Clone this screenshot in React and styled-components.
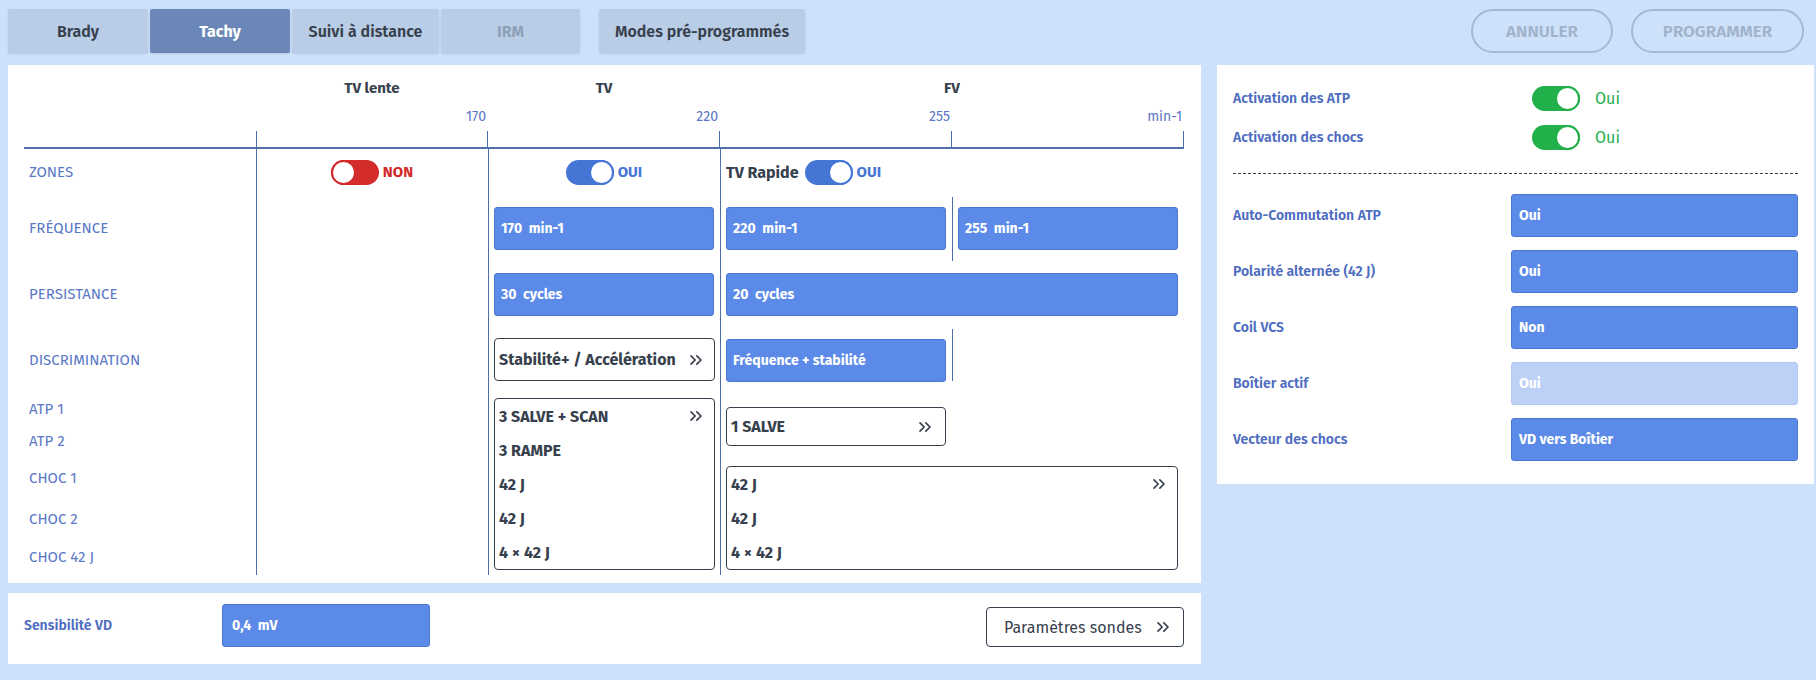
import React from 'react';
import styled, { createGlobalStyle, css } from 'styled-components';
import { ChevronsRight } from 'lucide-react';

const C = {
  page: '#cde1fa',
  tab: '#b9cde6',
  tabActive: '#6b87b8',
  dark: '#37404d',
  label: '#5a78c6',
  labelStrong: '#4e6cc0',
  line: '#4f70a6',
  fill: '#5b8ae8',
  fillBorder: '#4d78d0',
  disabled: '#bcd1f5',
  red: '#d42b2b',
  blue: '#4576d6',
  green: '#22b04b',
};

const GlobalStyle = createGlobalStyle`
  html, body { margin: 0; padding: 0; background: ${C.page}; }
  body {
    width: 1816px;
    height: 680px;
    overflow: hidden;
    font-family: "Fira Sans", "Open Sans", "Noto Sans", sans-serif;
    color: ${C.dark};
  }
  * { box-sizing: border-box; }
`;

const Page = styled.div`
  padding: 9px 2px 0 8px;
  display: flex;
  flex-direction: column;
  gap: 12px;
`;

/* ---------- top bar ---------- */
const TopBar = styled.div`
  display: flex;
  align-items: center;
  height: 44px;
`;

const TabGroup = styled.div`
  display: flex;
  gap: 2px;
`;

const Tab = styled.button`
  width: ${(p) => p.$w}px;
  height: 44px;
  border: none;
  border-radius: 2px;
  background: ${(p) => (p.$active ? C.tabActive : C.tab)};
  color: ${(p) => (p.$active ? '#ffffff' : p.$disabled ? '#8d9db3' : C.dark)};
  font-family: inherit;
  font-size: 16px;
  font-weight: ${(p) => (p.$active ? 700 : 600)};
  box-shadow: 0 1px 2px rgba(60, 90, 130, 0.18);
  padding: 0;
  cursor: pointer;
`;

const ModesTab = styled(Tab)`
  margin-left: 19px;
`;

const Actions = styled.div`
  margin-left: auto;
  margin-right: 10px;
  display: flex;
  gap: 18px;
`;

const PillButton = styled.button`
  width: ${(p) => p.$w}px;
  height: 44px;
  border-radius: 22px;
  border: 2px solid #a6b9d3;
  background: transparent;
  color: #a1b2c9;
  font-family: inherit;
  font-size: 17px;
  font-weight: 600;
  text-transform: uppercase;
  padding: 0;
`;

/* ---------- layout ---------- */
const Content = styled.div`
  display: flex;
  gap: 16px;
  align-items: flex-start;
`;

const LeftCol = styled.div`
  width: 1193px;
  display: flex;
  flex-direction: column;
  gap: 10px;
`;

const Panel = styled.div`
  background: #ffffff;
`;

const ZonePanel = styled(Panel)`
  height: 518px;
  padding: 0 17px 8px 16px;
  display: grid;
  grid-template-columns: repeat(5, 232px);
  grid-template-rows: 44px 22px 18px auto;
`;

/* ---------- header ---------- */
const ZoneTitle = styled.div`
  grid-row: 1;
  grid-column: ${(p) => p.$col};
  padding-top: 14px;
  line-height: 18px;
  text-align: center;
  font-size: 15px;
  font-weight: 700;
  color: ${C.dark};
`;

const Rate = styled.div`
  grid-row: 2;
  grid-column: ${(p) => p.$col};
  line-height: 16px;
  text-align: right;
  padding-right: 2px;
  font-size: 14px;
  color: ${C.label};
`;

const Axis = styled.div`
  grid-row: 3;
  grid-column: 1 / -1;
  display: grid;
  grid-template-columns: repeat(5, 232px);
  border-bottom: 2px solid ${C.line};
`;

const Tick = styled.div`
  border-right: 1px solid ${C.line};
  ${(p) =>
    p.$first &&
    css`
      border-left: 1px solid ${C.line};
    `}
`;

/* ---------- body ---------- */
const Body = styled.div`
  grid-row: 4;
  grid-column: 1 / -1;
  display: grid;
  grid-template-columns: repeat(5, 232px);
  grid-template-rows: 46px 66px 66px 66px 32px 32px 42px 40px 36px;
`;

const ColumnLine = styled.div`
  grid-column: ${(p) => p.$col};
  grid-row: ${(p) => p.$row || '1 / -1'};
  border-left: 1px solid ${C.line};
  margin: ${(p) => p.$m || '0'};
  pointer-events: none;
`;

const RowLabel = styled.div`
  grid-column: 1;
  grid-row: ${(p) => p.$row};
  align-self: center;
  padding-left: 5px;
  font-size: 15px;
  color: ${C.label};
  text-transform: uppercase;
`;

const ZoneCell = styled.div`
  grid-row: 1;
  grid-column: ${(p) => p.$col};
  display: flex;
  align-items: center;
  justify-content: ${(p) => (p.$start ? 'flex-start' : 'center')};
  padding-left: ${(p) => (p.$start ? '6px' : '0')};
  gap: 4px;
`;

const ZoneName = styled.span`
  font-size: 16px;
  font-weight: 700;
  color: ${C.dark};
  margin-right: 2px;
`;

const Track = styled.span`
  position: relative;
  display: inline-block;
  width: 48px;
  height: 25px;
  border-radius: 13px;
  background: ${(p) => p.$color};
  flex: none;
`;

const Knob = styled.span`
  position: absolute;
  top: 0;
  ${(p) => (p.$on ? 'right: 0;' : 'left: 0;')}
  width: 25px;
  height: 25px;
  border-radius: 50%;
  background: #ffffff;
  border: 2px solid ${(p) => p.$color};
`;

const ToggleText = styled.span`
  font-size: ${(p) => (p.$light ? '16px' : '15px')};
  font-weight: ${(p) => (p.$light ? 400 : 700)};
  color: ${(p) => p.$color};
  margin-left: ${(p) => (p.$light ? '15px' : '0')};
`;

const Toggle = ({ on, color }) => (
  <Track $color={color}>
    <Knob $on={on} $color={color} />
  </Track>
);

const ValueBox = styled.div`
  grid-column: ${(p) => p.$col};
  grid-row: ${(p) => p.$row};
  align-self: center;
  height: 43px;
  margin: 0 6px 0 6px;
  border-radius: 3px;
  background: ${C.fill};
  border: 1px solid ${C.fillBorder};
  display: flex;
  align-items: center;
  padding: 0 6px;
  color: #ffffff;
  font-size: 14px;
  font-weight: 700;
  white-space: pre;
`;

const OutlineBox = styled.div`
  grid-column: ${(p) => p.$col};
  grid-row: ${(p) => p.$row};
  align-self: ${(p) => (p.$top ? 'start' : 'stretch')};
  margin: ${(p) => p.$m || '0 5px 0 6px'};
  height: ${(p) => (p.$h ? `${p.$h}px` : 'auto')};
  border: 1px solid ${C.dark};
  border-radius: 4px;
  background: #ffffff;
  display: flex;
  flex-direction: column;
  justify-content: ${(p) => (p.$center ? 'center' : 'flex-start')};
`;

const BoxLine = styled.div`
  display: flex;
  align-items: center;
  justify-content: space-between;
  height: ${(p) => (p.$h ? `${p.$h}px` : '34px')};
  padding: 0 ${(p) => p.$pr || 8}px 0 4px;
  font-size: 16px;
  font-weight: 700;
  color: ${C.dark};
`;

const Chevrons = styled(ChevronsRight)`
  flex: none;
  color: ${C.dark};
`;

/* ---------- bottom panel ---------- */
const SensePanel = styled(Panel)`
  height: 71px;
  padding: 0 17px 7px 16px;
  display: flex;
  align-items: center;
`;

const SenseLabel = styled.div`
  width: 198px;
  font-size: 14px;
  font-weight: 600;
  color: ${C.labelStrong};
`;

const SenseBox = styled.div`
  width: 208px;
  height: 43px;
  border-radius: 3px;
  background: ${C.fill};
  border: 1px solid ${C.fillBorder};
  display: flex;
  align-items: center;
  padding: 0 9px;
  color: #ffffff;
  font-size: 14px;
  font-weight: 700;
  white-space: pre;
`;

const ProbeButton = styled.button`
  margin-left: auto;
  margin-top: 4px;
  width: 198px;
  height: 40px;
  border: 1px solid ${C.dark};
  border-radius: 4px;
  background: #ffffff;
  display: flex;
  align-items: center;
  justify-content: space-between;
  padding: 0 10px 0 17px;
  font-family: inherit;
  font-size: 16px;
  color: ${C.dark};
`;

/* ---------- right panel ---------- */
const SettingsPanel = styled(Panel)`
  width: 597px;
  height: 419px;
  padding: 14px 16px 23px 16px;
  display: flex;
  flex-direction: column;
`;

const SwitchRow = styled.div`
  height: 39px;
  display: grid;
  grid-template-columns: 299px auto 1fr;
  align-items: center;
`;

const SettingLabel = styled.div`
  font-size: 14px;
  font-weight: 600;
  color: ${C.labelStrong};
`;

const Divider = styled.hr`
  margin: 16px 0 20px;
  border: none;
  border-top: 1px dashed #3a3a3a;
  height: 0;
`;

const SettingsGrid = styled.div`
  display: grid;
  grid-template-columns: 278px 287px;
  grid-auto-rows: 43px;
  row-gap: 13px;
  align-items: center;
`;

const SettingValue = styled.div`
  height: 43px;
  border-radius: 3px;
  background: ${(p) => (p.$disabled ? C.disabled : C.fill)};
  border: 1px solid ${(p) => (p.$disabled ? '#b3c8ee' : C.fillBorder)};
  display: flex;
  align-items: center;
  padding: 0 7px;
  color: #ffffff;
  font-size: 14px;
  font-weight: 700;
`;

const settings = [
  ['Auto-Commutation ATP', 'Oui'],
  ['Polarité alternée (42 J)', 'Oui'],
  ['Coil VCS', 'Non'],
  ['Boîtier actif', 'Oui', true],
  ['Vecteur des chocs', 'VD vers Boîtier'],
];

const Chev = () => <Chevrons size={20} strokeWidth={2} />;

export default function App() {
  return (
    <>
      <GlobalStyle />
      <Page>
        <TopBar>
          <TabGroup>
            <Tab $w={140}>Brady</Tab>
            <Tab $w={140} $active>Tachy</Tab>
            <Tab $w={147}>Suivi à distance</Tab>
            <Tab $w={139} $disabled>IRM</Tab>
          </TabGroup>
          <ModesTab $w={206}>Modes pré-programmés</ModesTab>
          <Actions>
            <PillButton $w={142}>Annuler</PillButton>
            <PillButton $w={173}>Programmer</PillButton>
          </Actions>
        </TopBar>

        <Content>
          <LeftCol>
            <ZonePanel>
              <ZoneTitle $col="2">TV lente</ZoneTitle>
              <ZoneTitle $col="3">TV</ZoneTitle>
              <ZoneTitle $col="4 / 6">FV</ZoneTitle>
              <Rate $col="2">170</Rate>
              <Rate $col="3">220</Rate>
              <Rate $col="4">255</Rate>
              <Rate $col="5">min-1</Rate>
              <Axis>
                <div />
                <Tick $first />
                <Tick />
                <Tick />
                <Tick />
              </Axis>

              <Body>
                <ColumnLine $col="2" />
                <ColumnLine $col="3" />
                <ColumnLine $col="4" />
                <ColumnLine $col="5" $row="2" $m="2px 0 0 0" />
                <ColumnLine $col="5" $row="4" $m="2px 0 12px 0" />

                <RowLabel $row="1">Zones</RowLabel>
                <RowLabel $row="2">Fréquence</RowLabel>
                <RowLabel $row="3">Persistance</RowLabel>
                <RowLabel $row="4">Discrimination</RowLabel>
                <RowLabel $row="5">ATP 1</RowLabel>
                <RowLabel $row="6">ATP 2</RowLabel>
                <RowLabel $row="7">Choc 1</RowLabel>
                <RowLabel $row="8">Choc 2</RowLabel>
                <RowLabel $row="9">Choc 42 J</RowLabel>

                <ZoneCell $col="2">
                  <Toggle on={false} color={C.red} />
                  <ToggleText $color={C.red}>NON</ToggleText>
                </ZoneCell>
                <ZoneCell $col="3">
                  <Toggle on color={C.blue} />
                  <ToggleText $color={C.blue}>OUI</ToggleText>
                </ZoneCell>
                <ZoneCell $col="4 / 6" $start>
                  <ZoneName>TV Rapide</ZoneName>
                  <Toggle on color={C.blue} />
                  <ToggleText $color={C.blue}>OUI</ToggleText>
                </ZoneCell>

                <ValueBox $col="3" $row="2">{'170  min-1'}</ValueBox>
                <ValueBox $col="4" $row="2">{'220  min-1'}</ValueBox>
                <ValueBox $col="5" $row="2">{'255  min-1'}</ValueBox>

                <ValueBox $col="3" $row="3">{'30  cycles'}</ValueBox>
                <ValueBox $col="4 / 6" $row="3">{'20  cycles'}</ValueBox>

                <OutlineBox $col="3" $row="4" $top $h={43} $m="11px 5px 0 6px" $center>
                  <BoxLine $h={41}>
                    Stabilité+ / Accélération
                    <Chev />
                  </BoxLine>
                </OutlineBox>
                <ValueBox $col="4" $row="4">Fréquence + stabilité</ValueBox>

                <OutlineBox $col="3" $row="5 / 10" $m="5px 5px 5px 6px">
                  <BoxLine>
                    3 SALVE + SCAN
                    <Chev />
                  </BoxLine>
                  <BoxLine>3 RAMPE</BoxLine>
                  <BoxLine>42 J</BoxLine>
                  <BoxLine>42 J</BoxLine>
                  <BoxLine>4 × 42 J</BoxLine>
                </OutlineBox>

                <OutlineBox $col="4" $row="5 / 7" $top $h={39} $m="14px 6px 0 6px" $center>
                  <BoxLine $h={37} $pr={10}>
                    1 SALVE
                    <Chev />
                  </BoxLine>
                </OutlineBox>

                <OutlineBox $col="4 / 6" $row="7 / 10" $m="9px 6px 5px 6px">
                  <BoxLine>
                    42 J
                    <Chev />
                  </BoxLine>
                  <BoxLine>42 J</BoxLine>
                  <BoxLine>4 × 42 J</BoxLine>
                </OutlineBox>
              </Body>
            </ZonePanel>

            <SensePanel>
              <SenseLabel>Sensibilité VD</SenseLabel>
              <SenseBox>{'0,4  mV'}</SenseBox>
              <ProbeButton>
                Paramètres sondes
                <Chev />
              </ProbeButton>
            </SensePanel>
          </LeftCol>

          <SettingsPanel>
            <SwitchRow>
              <SettingLabel>Activation des ATP</SettingLabel>
              <Toggle on color={C.green} />
              <ToggleText $color={C.green} $light>Oui</ToggleText>
            </SwitchRow>
            <SwitchRow>
              <SettingLabel>Activation des chocs</SettingLabel>
              <Toggle on color={C.green} />
              <ToggleText $color={C.green} $light>Oui</ToggleText>
            </SwitchRow>
            <Divider />
            <SettingsGrid>
              {settings.map(([label, value, disabled]) => (
                <React.Fragment key={label}>
                  <SettingLabel>{label}</SettingLabel>
                  <SettingValue $disabled={disabled}>{value}</SettingValue>
                </React.Fragment>
              ))}
            </SettingsGrid>
          </SettingsPanel>
        </Content>
      </Page>
    </>
  );
}
